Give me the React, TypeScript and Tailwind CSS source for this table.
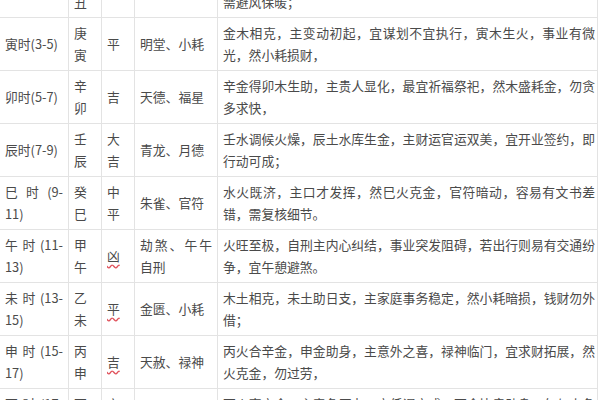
import React from "react";

type Row = {
  time: string;
  gz: string[];
  luck: string[];
  wavy?: boolean;
  gods: string;
  desc: string;
};

const rows: Row[] = [
  {
    time: "丑时(1-3)",
    gz: ["己", "丑"],
    luck: ["平"],
    gods: "天刑、朱雀",
    desc: "己土生辛金，丑土为金库，主根基稳固，宜静养蓄力，然寒湿重，需避风保暖；",
  },
  {
    time: "寅时(3-5)",
    gz: ["庚", "寅"],
    luck: ["平"],
    gods: "明堂、小耗",
    desc: "金木相克，主变动初起，宜谋划不宜执行，寅木生火，事业有微光，然小耗损财，",
  },
  {
    time: "卯时(5-7)",
    gz: ["辛", "卯"],
    luck: ["吉"],
    gods: "天德、福星",
    desc: "辛金得卯木生助，主贵人显化，最宜祈福祭祀，然木盛耗金，勿贪多求快，",
  },
  {
    time: "辰时(7-9)",
    gz: ["壬", "辰"],
    luck: ["大", "吉"],
    gods: "青龙、月德",
    desc: "壬水调候火燥，辰土水库生金，主财运官运双美，宜开业签约，即行动可成；",
  },
  {
    time: "巳时(9-11)",
    gz: ["癸", "巳"],
    luck: ["中", "平"],
    gods: "朱雀、官符",
    desc: "水火既济，主口才发挥，然巳火克金，官符暗动，容易有文书差错，需复核细节。",
  },
  {
    time: "午时(11-13)",
    gz: ["甲", "午"],
    luck: ["凶"],
    wavy: true,
    gods: "劫煞、午午自刑",
    desc: "火旺至极，自刑主内心纠结，事业突发阻碍，若出行则易有交通纷争，宜午憩避煞。",
  },
  {
    time: "未时(13-15)",
    gz: ["乙", "未"],
    luck: ["平"],
    wavy: true,
    gods: "金匮、小耗",
    desc: "木土相克，未土助日支，主家庭事务稳定，然小耗暗损，钱财勿外借；",
  },
  {
    time: "申时(15-17)",
    gz: ["丙", "申"],
    luck: ["吉"],
    wavy: true,
    gods: "天赦、禄神",
    desc: "丙火合辛金，申金助身，主意外之喜，禄神临门，宜求财拓展，然火克金，勿过劳，",
  },
  {
    time: "酉时(17-19)",
    gz: ["丁", "酉"],
    luck: ["六", "合"],
    gods: "白虎",
    desc: "丁火克辛金，主竞争压力，宜低调守成，酉金比肩助身，勿与人争执，",
  },
];

export default function App() {
  return (
    <div
      className="w-[600px] h-[400px] overflow-hidden bg-white text-[#4a4a4a] text-[12.8px] leading-[22px]"
      style={{ fontFamily: '"Noto Sans CJK SC", "Noto Sans", sans-serif' }}
    >
      <div className="w-[598px] -mt-[35px] flex flex-col">
        {rows.map((r, i) => (
          <div
            key={i}
            className="grid grid-cols-[68px_33px_33px_83px_381px] border-b border-[#e3e3e3]"
          >
            <div className="flex items-center px-[5px] py-[4px] min-h-[52px]">
              <div className="w-full text-justify">{r.time}</div>
            </div>
            <div className="flex items-center border-l border-[#e3e3e3] px-[5px] py-[4px]">
              <div>
                {r.gz.map((c, j) => (
                  <div key={j}>{c}</div>
                ))}
              </div>
            </div>
            <div className="flex items-center border-l border-[#e3e3e3] px-[5px] py-[4px]">
              <div>
                {r.luck.map((c, j) => (
                  <div key={j}>
                    {r.wavy ? (
                      <span className="underline decoration-wavy decoration-[#e0505a] underline-offset-[3px]">
                        {c}
                      </span>
                    ) : (
                      c
                    )}
                  </div>
                ))}
              </div>
            </div>
            <div className="flex items-center border-l border-[#e3e3e3] px-[5px] py-[4px]">
              <div className="w-full text-justify">{r.gods}</div>
            </div>
            <div className="flex items-center border-l border-r border-[#e3e3e3] pl-[5px] pr-[2px] py-[4px]">
              <div className="w-full text-justify">{r.desc}</div>
            </div>
          </div>
        ))}
      </div>
    </div>
  );
}
